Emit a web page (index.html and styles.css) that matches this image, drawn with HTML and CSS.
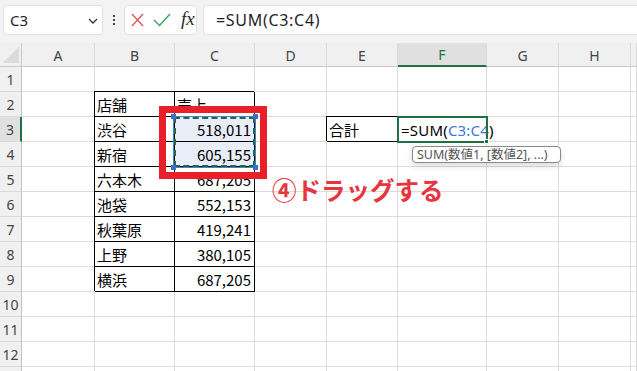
FILE: index.html
```html
<!DOCTYPE html>
<html lang="ja">
<head>
<meta charset="utf-8">
<link rel="stylesheet" href="styles.css">
</head>
<body>
<div class="app">
  <div class="toolbar">
    <div class="namebox">
      <span class="name">C3</span>
      <svg class="chev" width="10" height="6" viewBox="0 0 10 6"><polyline points="1,1 5,5 9,1" fill="none" stroke="#333" stroke-width="1.3"/></svg>
    </div>
    <div class="dots"><i></i><i></i><i></i></div>
    <div class="iconbox">
      <svg width="13" height="14" viewBox="0 0 13 14"><path d="M1 1 L12 13 M12 1 L1 13" stroke="#e05a5a" stroke-width="1.4" fill="none"/></svg>
      <svg width="18" height="14" viewBox="0 0 18 14"><path d="M1 7 L6.5 12.5 L17 1" stroke="#3da35d" stroke-width="1.4" fill="none"/></svg>
      <span class="fx">fx</span>
    </div>
    <div class="formulabox">=SUM(C3:C4)</div>
  </div>

  <div class="sheet">
    <div class="grid">
      <div class="corner"></div>
      <div class="ch">A</div><div class="ch">B</div><div class="ch">C</div><div class="ch">D</div><div class="ch">E</div><div class="ch active">F</div><div class="ch">G</div><div class="ch">H</div><div class="ch"></div>

      <div class="rh">1</div>
      <div class="c"></div><div class="c"></div><div class="c"></div><div class="c"></div><div class="c"></div><div class="c"></div><div class="c"></div><div class="c"></div><div class="c"></div>

      <div class="rh">2</div>
      <div class="c"></div><div class="c t">店舗</div><div class="c t">売上</div><div class="c"></div><div class="c"></div><div class="c"></div><div class="c"></div><div class="c"></div><div class="c"></div>

      <div class="rh active">3</div>
      <div class="c"></div><div class="c t">渋谷</div><div class="c t n sel">518,011</div><div class="c"></div><div class="c t">合計</div><div class="c edit">=SUM(<span class="ref">C3:C4</span>)<span class="caret"></span><span class="fill-handle"></span></div><div class="c"></div><div class="c"></div><div class="c"></div>

      <div class="rh">4</div>
      <div class="c"></div><div class="c t">新宿</div><div class="c t n sel">605,155</div><div class="c"></div><div class="c"></div><div class="c"></div><div class="c"></div><div class="c"></div><div class="c"></div>

      <div class="rh">5</div>
      <div class="c"></div><div class="c t">六本木</div><div class="c t n">687,205</div><div class="c"></div><div class="c"></div><div class="c"></div><div class="c"></div><div class="c"></div><div class="c"></div>

      <div class="rh">6</div>
      <div class="c"></div><div class="c t">池袋</div><div class="c t n">552,153</div><div class="c"></div><div class="c"></div><div class="c"></div><div class="c"></div><div class="c"></div><div class="c"></div>

      <div class="rh">7</div>
      <div class="c"></div><div class="c t">秋葉原</div><div class="c t n">419,241</div><div class="c"></div><div class="c"></div><div class="c"></div><div class="c"></div><div class="c"></div><div class="c"></div>

      <div class="rh">8</div>
      <div class="c"></div><div class="c t">上野</div><div class="c t n">380,105</div><div class="c"></div><div class="c"></div><div class="c"></div><div class="c"></div><div class="c"></div><div class="c"></div>

      <div class="rh">9</div>
      <div class="c"></div><div class="c t">横浜</div><div class="c t n">687,205</div><div class="c"></div><div class="c"></div><div class="c"></div><div class="c"></div><div class="c"></div><div class="c"></div>

      <div class="rh">10</div>
      <div class="c"></div><div class="c"></div><div class="c"></div><div class="c"></div><div class="c"></div><div class="c"></div><div class="c"></div><div class="c"></div><div class="c"></div>

      <div class="rh">11</div>
      <div class="c"></div><div class="c"></div><div class="c"></div><div class="c"></div><div class="c"></div><div class="c"></div><div class="c"></div><div class="c"></div><div class="c"></div>

      <div class="rh">12</div>
      <div class="c"></div><div class="c"></div><div class="c"></div><div class="c"></div><div class="c"></div><div class="c"></div><div class="c"></div><div class="c"></div><div class="c"></div>

      <div class="rh"></div>
      <div class="c"></div><div class="c"></div><div class="c"></div><div class="c"></div><div class="c"></div><div class="c"></div><div class="c"></div><div class="c"></div><div class="c"></div>
    </div>

    <div class="marquee">
      <span class="h h-tl"></span><span class="h h-tr"></span><span class="h h-bl"></span><span class="h h-br"></span>
    </div>
    <div class="redbox"></div>
    <div class="note">④ドラッグする</div>
    <div class="tip">SUM(数値1, [数値2], ...)</div>
  </div>
</div>
</body>
</html>
```

FILE: styles.css
```css
* { box-sizing: border-box; }
html, body { margin: 0; padding: 0; }
body {
  width: 637px;
  height: 371px;
  overflow: hidden;
  background: #ffffff;
  font-family: "Noto Sans", "Noto Sans CJK JP", sans-serif;
}
.app { width: 637px; height: 371px; display: flex; flex-direction: column; }

/* toolbar */
.toolbar {
  height: 43px;
  flex: none;
  background: #f3f3f3;
  display: flex;
  align-items: flex-start;
  padding: 5px 0 0 3px;
}
.namebox {
  width: 100px;
  height: 30px;
  background: #fff;
  border: 1px solid #e1e1e1;
  border-radius: 4px;
  display: flex;
  align-items: center;
  justify-content: space-between;
  padding: 0 4px 0 6px;
}
.name { font-size: 15px; color: #1f1f1f; }
.chev { margin-top: 1px; }
.dots {
  width: 21px;
  height: 30px;
  display: flex;
  flex-direction: column;
  align-items: center;
  justify-content: center;
  gap: 2px;
}
.dots i { display: block; width: 2px; height: 2px; background: #444; }
.iconbox {
  width: 73px;
  height: 30px;
  background: #fff;
  border: 1px solid #e1e1e1;
  border-radius: 4px;
  display: flex;
  align-items: center;
  padding-left: 6px;
  gap: 9px;
}
.fx {
  font-family: "Liberation Serif", "DejaVu Serif", serif;
  font-style: italic;
  font-size: 19px;
  color: #2b2b2b;
  margin-left: 1px;
  margin-top: -2px;
}
.formulabox {
  flex: 1;
  margin-left: 6px;
  height: 30px;
  background: #fff;
  border: 1px solid #e1e1e1;
  border-right: none;
  border-radius: 4px 0 0 4px;
  display: flex;
  align-items: center;
  padding-left: 12px;
  font-size: 16px;
  letter-spacing: 0.7px;
  color: #1f1f1f;
}

/* sheet */
.sheet { position: relative; flex: 1; overflow: hidden; }
.grid {
  display: grid;
  grid-template-columns: 22px 73px 80px 80px 72px 71px 89px 72px 72px 1fr;
  grid-template-rows: 24px repeat(12, 25px) 25px;
}
.corner {
  background: #f0f0f0;
  border-right: 1px solid #c9c9c9;
  border-bottom: 1px solid #c9c9c9;
  position: relative;
}
.corner::after {
  content: "";
  position: absolute;
  left: 3px; top: 4px; width: 16px; height: 16px;
  background: linear-gradient(to bottom right, transparent 50%, #dcdcdc 50%);
}
.ch {
  background: #f0f0f0;
  border-right: 1px solid #dadada;
  border-bottom: 1px solid #c9c9c9;
  display: flex;
  align-items: center;
  justify-content: center;
  font-size: 14px;
  color: #444;
  padding-top: 1px;
}
.ch.active {
  background: #e0e0e0;
  color: #1e7145;
  border-bottom: 2px solid #1e7145;
}
.rh {
  background: #f0f0f0;
  border-right: 1px solid #c2c2c2;
  border-bottom: 1px solid #dadada;
  display: flex;
  align-items: center;
  justify-content: center;
  font-size: 14px;
  color: #444;
}
.rh.active {
  background: #e0e0e0;
  border-right: 2px solid #1e7145;
}
.c {
  border-right: 1px solid #dcdcdc;
  border-bottom: 1px solid #dcdcdc;
  display: flex;
  align-items: center;
  padding: 1px 2px 0 2px;
  font-family: "Noto Sans CJK JP", "Noto Sans", sans-serif;
  font-size: 15px;
  color: #000;
  white-space: nowrap;
}
.c.t {
  border-right: 1px solid #000;
  border-bottom: 1px solid #000;
  box-shadow: -1px -1px 0 0 #000;
}
.c.n { justify-content: flex-end; padding-right: 3px; }
.c.sel { background: #e9edf7; }
.c.edit {
  position: relative;
  z-index: 2;
  overflow: visible;
  outline: 2px solid #1e7145;
  outline-offset: -1px;
  padding-left: 3px;
  font-family: "Noto Sans", "Noto Sans CJK JP", sans-serif;
  letter-spacing: 0.2px;
}
.ref { color: #3b78d8; }
.caret {
  display: inline-block;
  width: 1px;
  height: 21px;
  background: #000;
  margin-left: 0;
}
.fill-handle {
  position: absolute;
  right: -3px;
  bottom: -3px;
  width: 5px;
  height: 5px;
  background: #1e7145;
  border: 1px solid #fff;
}

/* overlays */
.marquee {
  position: absolute;
  left: 173px;
  top: 73px;
  width: 83px;
  height: 52px;
  border: 1px solid #4a7fd0;
  z-index: 3;
}
.marquee::before {
  content: "";
  position: absolute;
  inset: 0;
  border: 2px dashed #1f6b3f;
}
.h {
  position: absolute;
  width: 5px;
  height: 5px;
  background: #3a6fcc;
}
.h-tl { left: -3px; top: -3px; }
.h-tr { right: -3px; top: -3px; }
.h-bl { left: -3px; bottom: -3px; }
.h-br { right: -3px; bottom: -3px; }
.redbox {
  position: absolute;
  left: 159px;
  top: 63px;
  width: 108px;
  height: 73px;
  border: 7px solid #e8202a;
  z-index: 4;
}
.note {
  position: absolute;
  left: 272px;
  top: 131px;
  font-family: "Noto Sans CJK JP", sans-serif;
  font-weight: 700;
  font-size: 24.5px;
  line-height: 31px;
  color: #e8343c;
  z-index: 4;
}
.tip {
  position: absolute;
  left: 412px;
  top: 103px;
  width: 149px;
  height: 17px;
  border: 1px solid #8a8a8a;
  border-radius: 4px;
  background: #fff;
  box-shadow: 0 3px 6px rgba(0,0,0,0.15);
  font-family: "Noto Sans", "Noto Sans CJK JP", sans-serif;
  font-size: 12.5px;
  line-height: 15px;
  color: #555;
  padding-left: 4px;
  white-space: nowrap;
  z-index: 5;
}
```
